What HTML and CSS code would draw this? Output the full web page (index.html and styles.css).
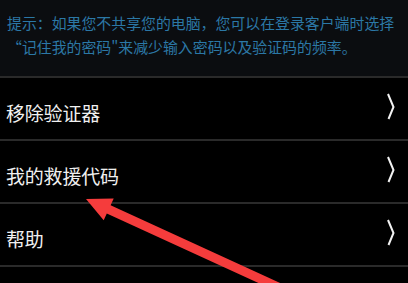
FILE: index.html
```html
<!DOCTYPE html>
<html lang="zh">
<head>
<meta charset="utf-8">
<link rel="stylesheet" href="styles.css">
</head>
<body>
<div class="page">
  <div class="hint">提示：如果您不共享您的电脑，您可以在登录客户端时选择<br>“记住我的密码"来减少输入密码以及验证码的频率。</div>
  <div class="list">
    <div class="row"><span class="label">移除验证器</span><svg class="chev" width="10" height="28" viewBox="0 0 10 28"><polyline points="2,1 7.5,14 2.5,26" fill="none" stroke="#f2f2f2" stroke-width="2"/></svg></div>
    <div class="row"><span class="label">我的救援代码</span><svg class="chev" width="10" height="28" viewBox="0 0 10 28"><polyline points="2,1 7.5,14 2.5,26" fill="none" stroke="#f2f2f2" stroke-width="2"/></svg></div>
    <div class="row"><span class="label">帮助</span><svg class="chev" width="10" height="28" viewBox="0 0 10 28"><polyline points="2,1 7.5,14 2.5,26" fill="none" stroke="#f2f2f2" stroke-width="2"/></svg></div>
    <div class="row"></div>
  </div>
  <svg class="arrow" width="408" height="283" viewBox="0 0 408 283"><polygon points="86,199 113.7,198.5 110.6,205.3 291.9,288.4 288.1,296.6 106.8,213.5 103.7,220.3" fill="#f53c3c"/></svg>
</div>
</body>
</html>
```
FILE: styles.css
```css
html, body {
  margin: 0;
  padding: 0;
  background: #000;
}
.page {
  position: relative;
  width: 408px;
  height: 283px;
  overflow: hidden;
  font-family: "Noto Sans CJK SC", "Noto Sans", sans-serif;
}
.hint {
  background: #0b0d10;
  color: #2b78a6;
  font-size: 14.9px;
  line-height: 24px;
  padding: 11px 0 17px 7px;
  height: 48px;
  white-space: nowrap;
}
.list {
  display: flex;
  flex-direction: column;
}
.row {
  border-top: 2px solid #2a2a2a;
  height: 61px;
  display: flex;
  align-items: center;
  justify-content: space-between;
  padding: 0 12px 0 6px;
}
.label {
  color: #f0f0f0;
  font-size: 19px;
  padding-top: 8px;
  letter-spacing: -0.2px;
}
.chev {
  display: block;
  margin-top: -3px;
}
.arrow {
  position: absolute;
  left: 0;
  top: 0;
}
```
